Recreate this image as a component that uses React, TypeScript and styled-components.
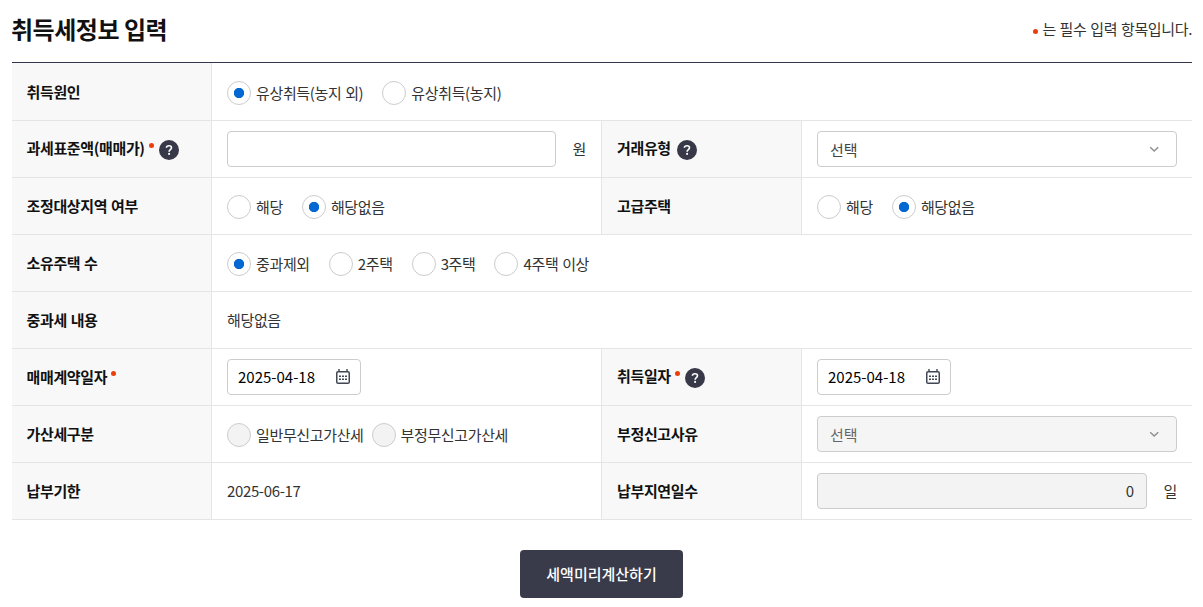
import React from "react";
import styled, { createGlobalStyle } from "styled-components";

const GlobalStyle = createGlobalStyle`
  * {
    box-sizing: border-box;
  }

  body {
    margin: 0;
    background: #fff;
    color: #333;
    font-family: "Noto Sans CJK KR", "Noto Sans", sans-serif;
    font-size: 15px;
    line-height: 22px;
    letter-spacing: -0.36px;
    word-spacing: 0.8px;
    overflow: hidden;
  }
`;

const Page = styled.main`
  width: 1180px;
  margin-left: 12px;
`;

const Header = styled.header`
  height: 62px;
  display: flex;
  align-items: flex-start;
  justify-content: space-between;
`;

const Title = styled.h2`
  margin: 11px 0 0 -1px;
  color: #111;
  font-size: 24px;
  line-height: 36px;
  font-weight: 700;
  letter-spacing: -0.48px;
  word-spacing: 0;
`;

const Notice = styled.p`
  margin: 18px 0 0;
  display: flex;
  align-items: center;
  gap: 4px;
`;

const Dot = styled.i`
  width: 5px;
  height: 5px;
  border-radius: 50%;
  background: #eb3f0b;
`;

const NoticeDot = styled(Dot)`
  margin-top: 4px;
`;

const LabelDot = styled(Dot)`
  margin: 0 0 8px 4px;
`;

const Table = styled.div`
  border-top: 1px solid #33364a;
`;

const Row = styled.div`
  height: 57px;
  display: grid;
  grid-template-columns: 200px 390px 200px 390px;
  border-bottom: 1px solid #e5e5e5;

  &:first-child {
    height: 58px;
  }
`;

const Label = styled.div`
  display: flex;
  align-items: center;
  padding: 0 15px 0 15px;
  background: #f8f8f8;
  border-right: 1px solid #e5e5e5;
  color: #111;
  font-weight: 700;

  &:first-child {
    padding-left: 14.5px;
  }
`;

const LabelText = styled.span<{ $raised?: boolean }>`
  padding-bottom: ${({ $raised }) => ($raised ? "3px" : "0")};
`;

const Cell = styled.div<{ $wide?: boolean }>`
  display: flex;
  align-items: center;
  padding: 0 15px;
  grid-column: ${({ $wide }) => ($wide ? "span 3" : "auto")};
  border-right: ${({ $wide }) => ($wide ? "0" : "1px solid #e5e5e5")};

  &:last-child {
    border-right: 0;
  }
`;

const HelpButton = styled.button<{ $gap: number }>`
  width: 20px;
  height: 20px;
  margin: 2px 0 0 ${({ $gap }) => $gap}px;
  padding: 0;
  border: 0;
  background: none;

  svg {
    display: block;
  }
`;

const RadioList = styled.div<{ $gap: number }>`
  display: flex;
  gap: ${({ $gap }) => $gap}px;
  padding-top: 2px;
`;

const RadioLabel = styled.label`
  display: flex;
  align-items: center;
  gap: 5px;
  white-space: nowrap;
`;

const RadioInput = styled.input`
  appearance: none;
  width: 24px;
  height: 24px;
  margin: 0;
  border: 1px solid #ccc;
  border-radius: 50%;
  background: #fff;

  &:checked {
    background: radial-gradient(circle, #0468d2 4.8px, #fff 5.5px);
  }

  &:disabled {
    background: #f3f3f3;
  }
`;

const TextInput = styled.input`
  width: 329px;
  height: 36px;
  padding: 0 12px 1px;
  border: 1px solid #ccc;
  border-radius: 4px;
  background: #fff;
  color: #333;
  font: inherit;
  text-align: right;

  &:disabled {
    width: 330px;
    background: #f3f3f3;
  }
`;

const Unit = styled.span`
  margin-left: auto;
`;

const SelectBox = styled.button<{ $disabled?: boolean }>`
  width: 360px;
  height: 36px;
  display: flex;
  align-items: center;
  justify-content: space-between;
  padding: 1px 15px 0 12px;
  border: 1px solid #ccc;
  border-radius: 4px;
  background: ${({ $disabled }) => ($disabled ? "#f5f5f5" : "#fff")};
  color: ${({ $disabled }) => ($disabled ? "#666" : "#444")};
  font: inherit;
  letter-spacing: 0;
`;

const DateBox = styled.div`
  width: 134px;
  height: 36px;
  display: flex;
  align-items: center;
  justify-content: space-between;
  padding: 0 9px 0 10px;
  border: 1px solid #ccc;
  border-radius: 4px;
  color: #000;
  letter-spacing: 0;
`;

const Submit = styled.button`
  display: block;
  width: 163px;
  height: 48px;
  margin: 30px 0 0 508px;
  padding: 0;
  border: 0;
  border-radius: 4px;
  background: #3a3b4a;
  color: #fff;
  font: inherit;
  font-weight: 500;
  letter-spacing: 0;
`;

const Help = ({ gap = 5 }: { gap?: number }) => (
  <HelpButton $gap={gap} aria-label="도움말">
    <svg width="20" height="20" viewBox="0 0 20 20" fill="none">
      <circle cx="10" cy="10" r="10" fill="#373848" />
      <path
        d="M7.4 7.8C7.5 6.4 8.5 5.7 10 5.7c1.5 0 2.5.8 2.5 2 0 1.8-2.4 1.9-2.4 4"
        stroke="#fff"
        strokeWidth="1.6"
      />
      <circle cx="10.1" cy="13.9" r="1.05" fill="#fff" />
    </svg>
  </HelpButton>
);

const Chevron = () => (
  <svg width="14" height="14" viewBox="0 0 14 14" fill="none">
    <path d="M3.2 4.3L7.2 8l4-3.7" stroke="#8f8f8f" strokeWidth="1.5" />
  </svg>
);

const Calendar = () => (
  <svg width="16" height="16" viewBox="0 0 16 16" fill="none">
    <rect x="1.75" y="2.75" width="12.5" height="11.6" rx="1.3" stroke="#414752" strokeWidth="1.5" />
    <path d="M4 0v3M12 0v3" stroke="#414752" strokeWidth="1.4" />
    <path
      d="M4 7.2h2M7 7.2h2M10 7.2h2M4 10.2h2M7 10.2h2M10 10.2h2"
      stroke="#414752"
      strokeWidth="1.5"
    />
  </svg>
);

interface RadioGroupProps {
  name: string;
  items: string[];
  checked?: number;
  disabled?: boolean;
  gap?: number;
}

const RadioGroup = ({ name, items, checked, disabled, gap = 19 }: RadioGroupProps) => (
  <RadioList $gap={gap}>
    {items.map((item, i) => (
      <RadioLabel key={item}>
        <RadioInput type="radio" name={name} defaultChecked={i === checked} disabled={disabled} />
        {item}
      </RadioLabel>
    ))}
  </RadioList>
);

const Select = ({ disabled }: { disabled?: boolean }) => (
  <SelectBox $disabled={disabled}>
    선택
    <Chevron />
  </SelectBox>
);

const DateField = ({ value }: { value: string }) => (
  <DateBox>
    {value}
    <Calendar />
  </DateBox>
);

const App = () => {
  return (
    <>
      <GlobalStyle />
      <Page>
        <Header>
          <Title>취득세정보 입력</Title>
          <Notice>
            <NoticeDot />는 필수 입력 항목입니다.
          </Notice>
        </Header>
        <Table>
          <Row>
            <Label>취득원인</Label>
            <Cell $wide>
              <RadioGroup name="cause" items={["유상취득(농지 외)", "유상취득(농지)"]} checked={0} />
            </Cell>
          </Row>
          <Row>
            <Label>
              <LabelText $raised>과세표준액(매매가)</LabelText>
              <LabelDot />
              <Help />
            </Label>
            <Cell>
              <TextInput />
              <Unit>원</Unit>
            </Cell>
            <Label>
              <LabelText $raised>거래유형</LabelText>
              <Help gap={6} />
            </Label>
            <Cell>
              <Select />
            </Cell>
          </Row>
          <Row>
            <Label>조정대상지역 여부</Label>
            <Cell>
              <RadioGroup name="area" items={["해당", "해당없음"]} checked={1} />
            </Cell>
            <Label>고급주택</Label>
            <Cell>
              <RadioGroup name="luxury" items={["해당", "해당없음"]} checked={1} />
            </Cell>
          </Row>
          <Row>
            <Label>소유주택 수</Label>
            <Cell $wide>
              <RadioGroup
                name="count"
                items={["중과제외", "2주택", "3주택", "4주택 이상"]}
                checked={0}
              />
            </Cell>
          </Row>
          <Row>
            <Label>중과세 내용</Label>
            <Cell $wide>해당없음</Cell>
          </Row>
          <Row>
            <Label>
              <LabelText>매매계약일자</LabelText>
              <LabelDot />
            </Label>
            <Cell>
              <DateField value="2025-04-18" />
            </Cell>
            <Label>
              <LabelText $raised>취득일자</LabelText>
              <LabelDot />
              <Help />
            </Label>
            <Cell>
              <DateField value="2025-04-18" />
            </Cell>
          </Row>
          <Row>
            <Label>가산세구분</Label>
            <Cell>
              <RadioGroup
                name="penalty"
                items={["일반무신고가산세", "부정무신고가산세"]}
                gap={8}
                disabled
              />
            </Cell>
            <Label>부정신고사유</Label>
            <Cell>
              <Select disabled />
            </Cell>
          </Row>
          <Row>
            <Label>납부기한</Label>
            <Cell>2025-06-17</Cell>
            <Label>납부지연일수</Label>
            <Cell>
              <TextInput defaultValue="0" disabled />
              <Unit>일</Unit>
            </Cell>
          </Row>
        </Table>
        <Submit>세액미리계산하기</Submit>
      </Page>
    </>
  );
};

export default App;
